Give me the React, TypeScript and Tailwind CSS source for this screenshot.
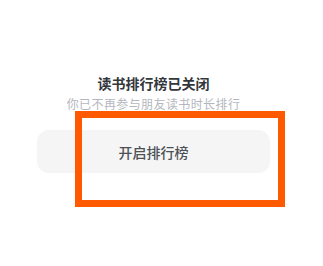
import React from "react";

export default function App() {
  return (
    <div
      className="relative h-[266px] w-[323px] overflow-hidden bg-white"
      style={{ fontFamily: '"Noto Sans CJK SC", "Noto Sans", sans-serif' }}
    >
      <div className="flex w-[307px] flex-col items-center pt-[73px]">
        <div className="text-[14px] font-semibold leading-[20px] text-[#33363b]">
          读书排行榜已关闭
        </div>
        <div className="mt-[3px] text-[12px] leading-[16px] tracking-[0.4px] text-[#b4b7bd]">
          你已不再参与朋友读书时长排行
        </div>
        <button className="mt-[18px] flex h-[43px] w-[233px] items-center justify-center rounded-[12px] bg-[#f5f5f6] text-[14px] font-medium leading-[20px] text-[#4d5055]">
          开启排行榜
        </button>
      </div>
      <div className="absolute left-[75px] top-[111px] h-[96px] w-[210px] border-[7px] border-[#ff5a00]" />
    </div>
  );
}
